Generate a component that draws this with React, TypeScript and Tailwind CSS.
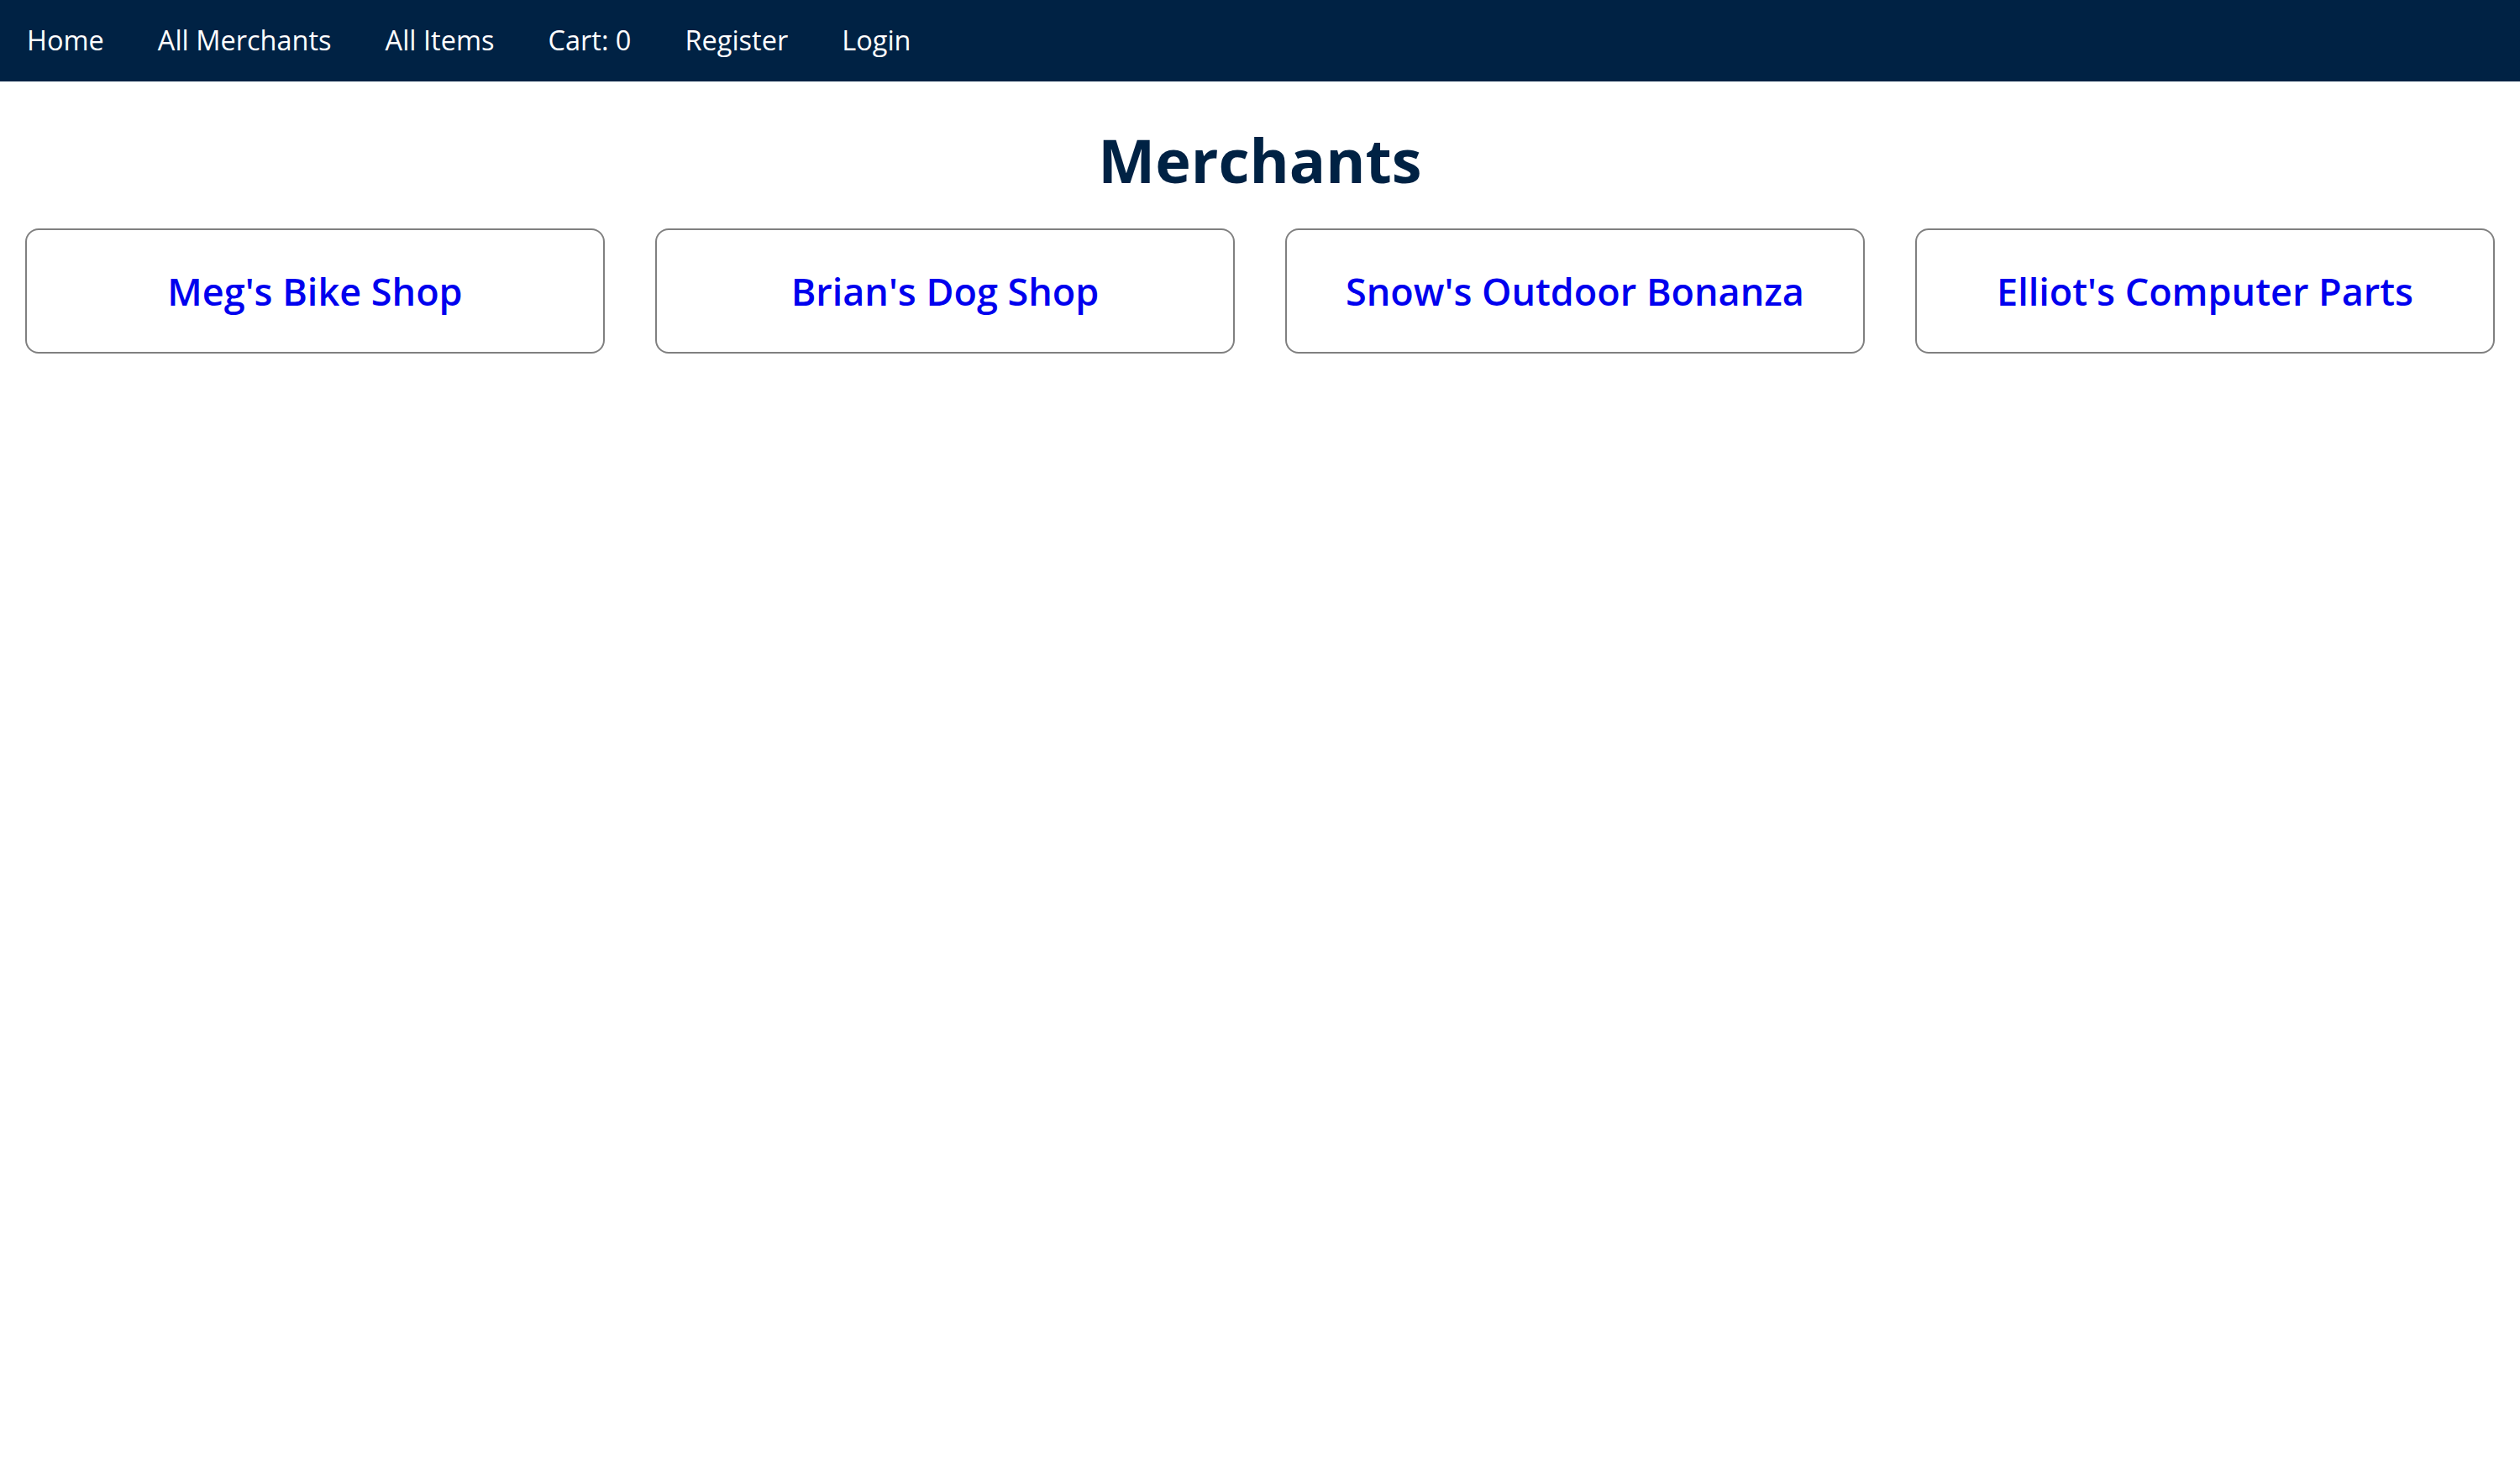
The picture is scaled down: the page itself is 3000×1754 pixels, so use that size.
import React from 'react';

const navLinks = ['Home', 'All Merchants', 'All Items', 'Cart: 0', 'Register', 'Login'];

const merchants = [
  "Meg's Bike Shop",
  "Brian's Dog Shop",
  "Snow's Outdoor Bonanza",
  "Elliot's Computer Parts",
];

export default function App() {
  return (
    <div className="min-h-screen bg-white font-['Open_Sans',sans-serif]">
      {/* Nav bar */}
      <nav className="h-[97px] bg-[#002244] flex items-center">
        {navLinks.map((label) => (
          <a
            key={label}
            href="#"
            className="px-[32px] text-[32.5px] leading-none text-white"
          >
            {label}
          </a>
        ))}
      </nav>

      {/* Page title */}
      <h1 className="pt-[45px] text-center text-[72px] leading-[96px] font-bold text-[#002244]">
        Merchants
      </h1>

      {/* Merchant cards */}
      <section className="mt-[34px] flex">
        {merchants.map((name) => (
          <div
            key={name}
            className="w-[23%] mx-[1%] h-[149px] border-2 border-[#808080] rounded-[16px] flex items-center justify-center"
          >
            <a href="#" className="text-[45px] font-semibold text-[#0000ee]">
              {name}
            </a>
          </div>
        ))}
      </section>
    </div>
  );
}
